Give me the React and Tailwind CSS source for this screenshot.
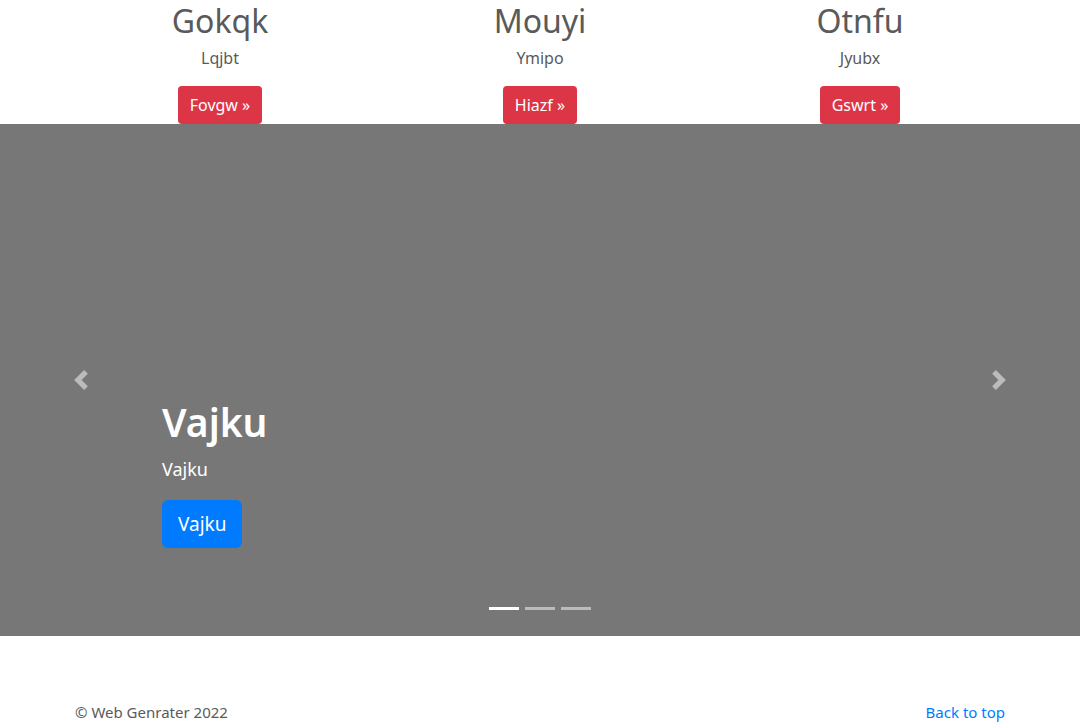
const FEATURES = [
  { title: "Gokqk", text: "Lqjbt", btn: "Fovgw" },
  { title: "Mouyi", text: "Ymipo", btn: "Hiazf" },
  { title: "Otnfu", text: "Jyubx", btn: "Gswrt" },
];

function Chevron({ dir }) {
  const d = dir === "left" ? "M5.25 0l-4 4 4 4 1.5-1.5L4.25 4l2.5-2.5L5.25 0z" : "M2.75 0l-1.5 1.5L3.75 4l-2.5 2.5L2.75 8l4-4-4-4z";
  return (
    <svg width="20" height="20" viewBox="0 0 8 8" fill="#fff">
      <path d={d} />
    </svg>
  );
}

export default function App() {
  return (
    <div className="bg-white text-[#5a5a5a] text-base leading-6 pb-12" style={{ fontFamily: '"Noto Sans", "Open Sans", sans-serif' }}>
      {/* Marketing columns */}
      <div className="w-[960px] mx-auto px-[15px] pt-[3px]">
        <div className="grid grid-cols-3 -mx-[15px]">
          {FEATURES.map((f) => (
            <div key={f.title} className="flex flex-col items-center text-center px-[15px]">
              <h2 className="text-[32px] leading-[35px] font-normal mb-2">{f.title}</h2>
              <p className="mb-4">{f.text}</p>
              <button className="bg-[#dc3545] text-white rounded px-3 py-1.5 leading-6 h-[38px]">
                {f.btn} »
              </button>
            </div>
          ))}
        </div>
      </div>

      {/* Carousel */}
      <div className="relative h-[512px] bg-[#777] mb-16 flex items-end">
        <div className="flex items-center justify-center w-[15%] self-stretch opacity-50">
          <Chevron dir="left" />
        </div>
        <div className="flex-1 pb-[88px] text-white">
          <h1 className="text-[39px] leading-[48px] font-semibold mb-2">Vajku</h1>
          <p className="text-[18px] leading-[30px] mb-4">Vajku</p>
          <button className="bg-[#007bff] text-white text-[19px] leading-[30px] px-4 py-[9px] rounded-md">Vajku</button>
        </div>
        <div className="flex items-center justify-center w-[15%] self-stretch opacity-50">
          <Chevron dir="right" />
        </div>
        <div className="absolute bottom-[26px] left-0 right-0 flex justify-center gap-[6px]">
          <span className="w-[30px] h-[3px] bg-white" />
          <span className="w-[30px] h-[3px] bg-white/50" />
          <span className="w-[30px] h-[3px] bg-white/50" />
        </div>
      </div>

      {/* Footer */}
      <footer className="w-[960px] mx-auto px-[15px] flex justify-between text-[15px]">
        <p>© Web Genrater 2022</p>
        <a href="#" className="text-[#007bff]">Back to top</a>
      </footer>
    </div>
  );
}
